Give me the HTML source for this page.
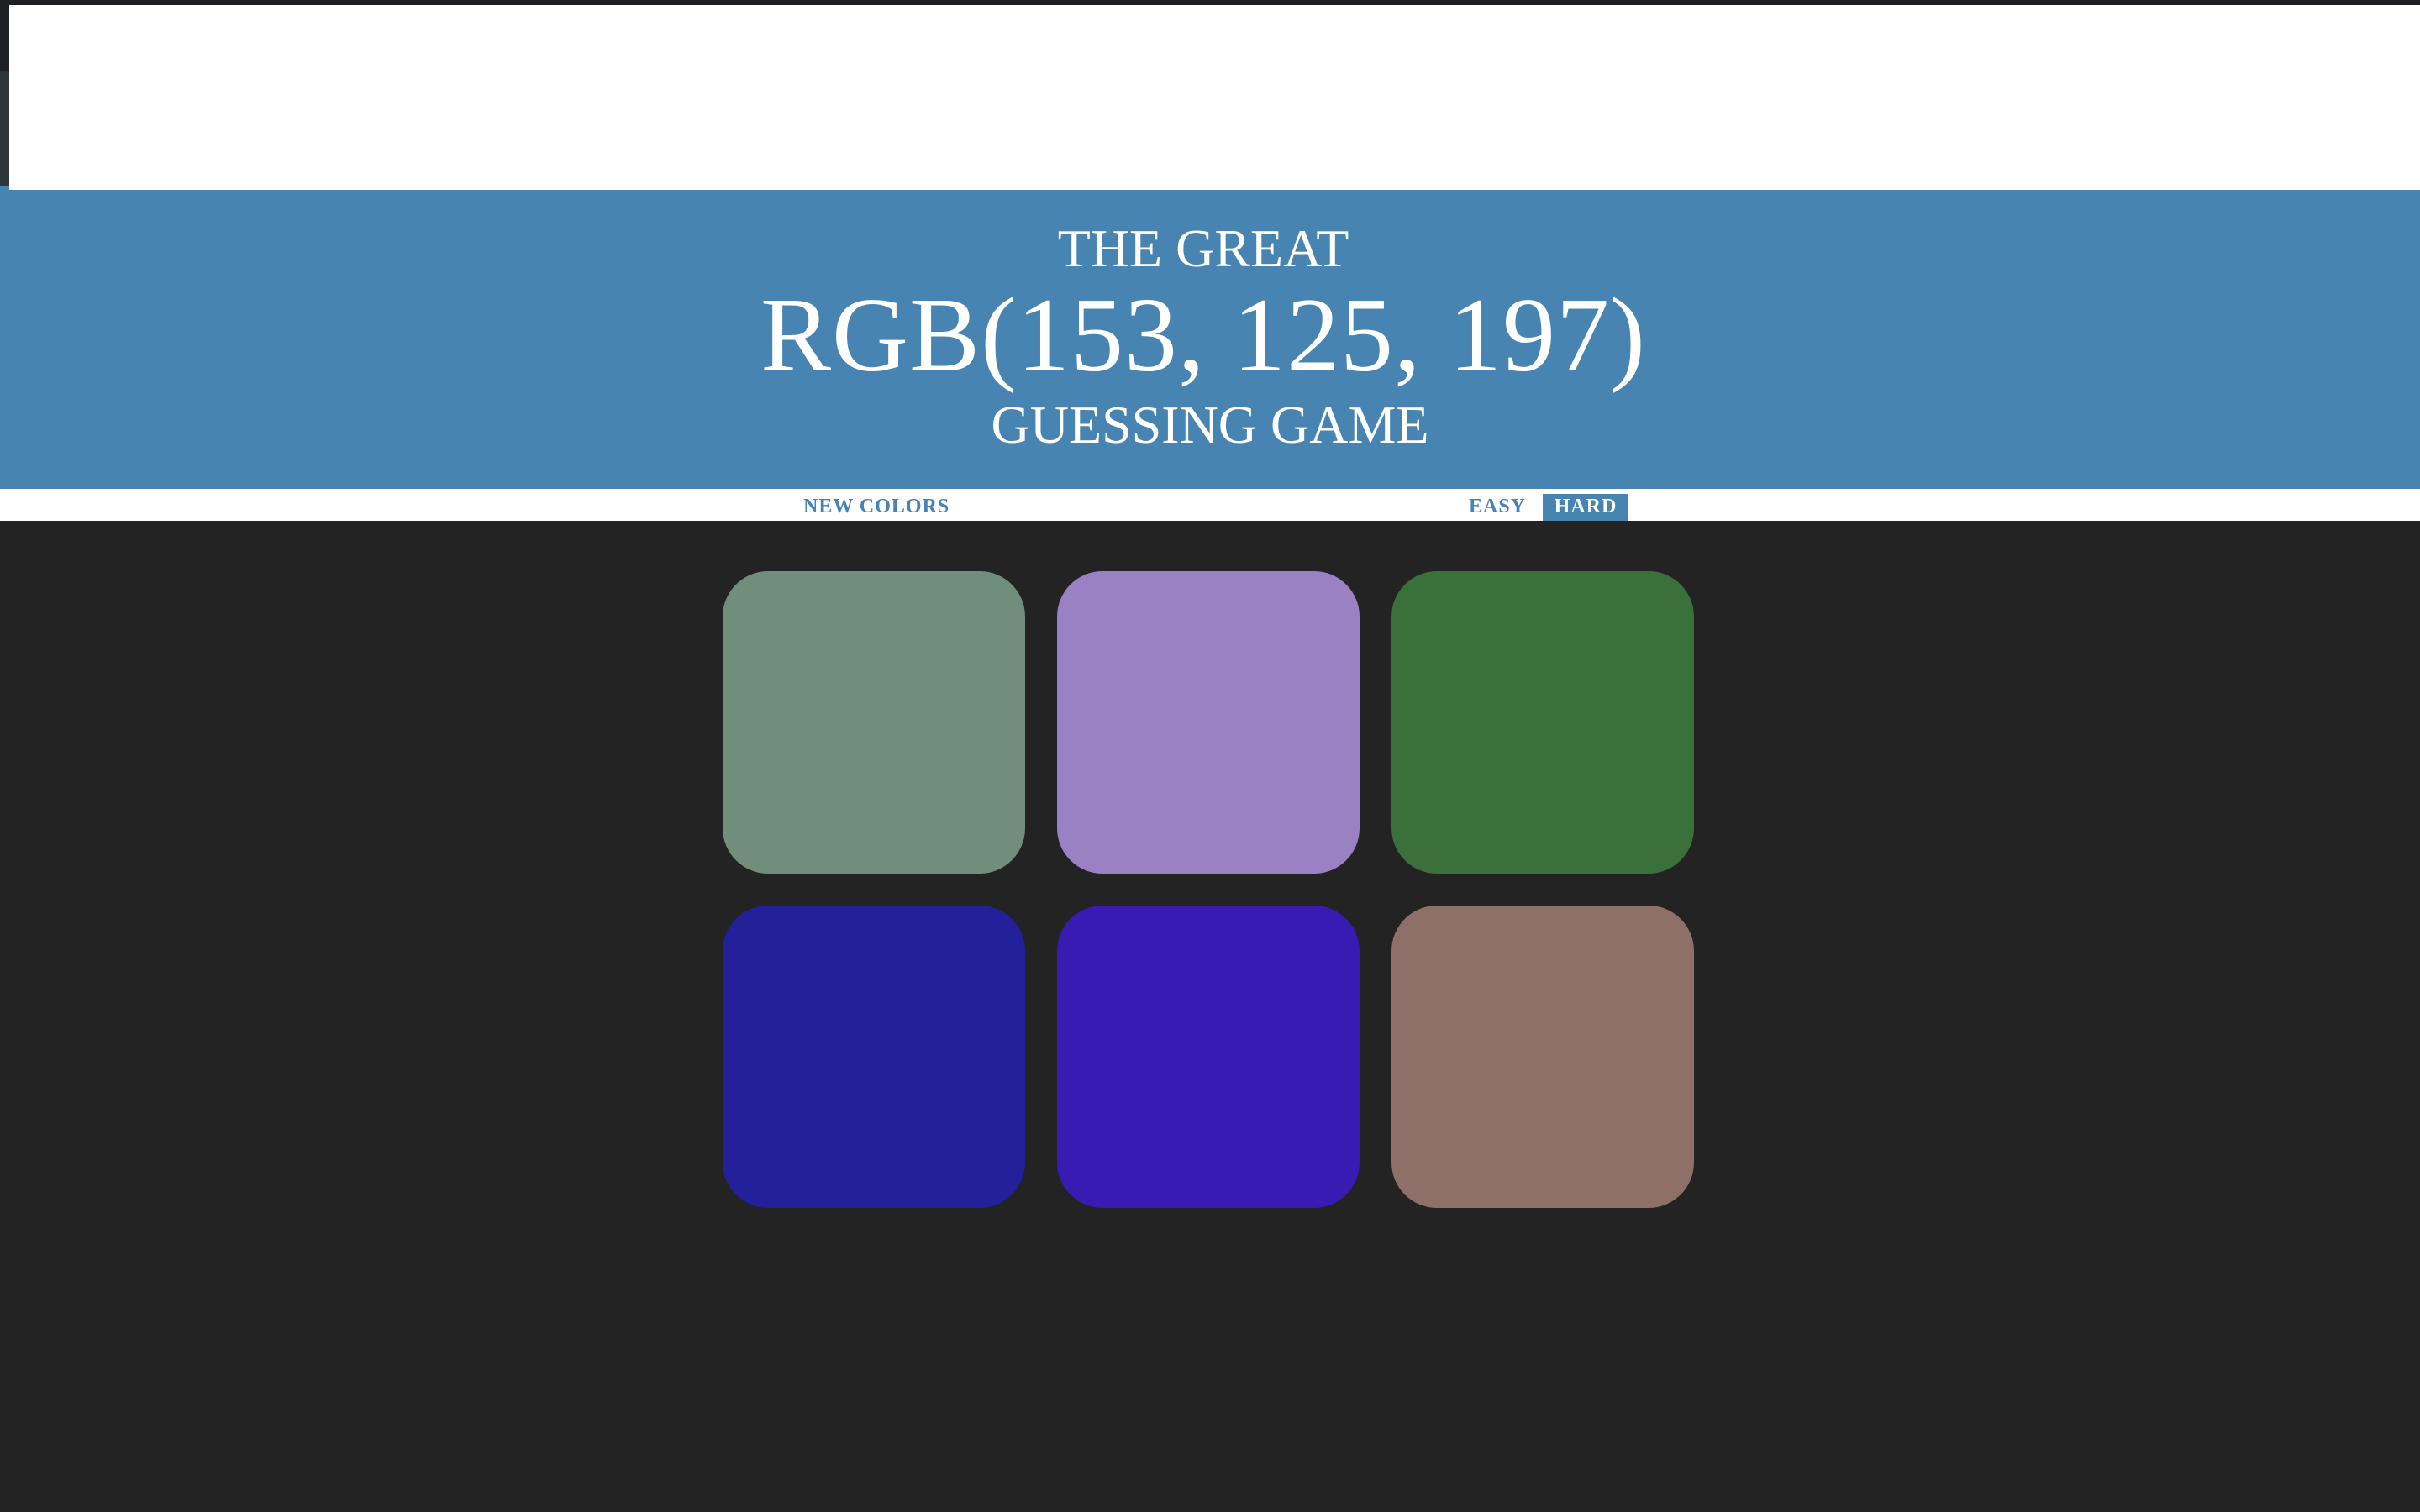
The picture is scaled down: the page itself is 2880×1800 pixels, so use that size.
<!DOCTYPE html>
<html><head><meta charset="utf-8"><style>
html,body{margin:0;padding:0;}
body{width:2880px;height:1800px;background:#232323;position:relative;overflow:hidden;font-family:"Liberation Serif","Times New Roman",serif;}
.a{position:absolute;}
.t{position:absolute;left:0;width:2880px;text-align:center;color:#fff;line-height:1;white-space:nowrap;}
.sq{position:absolute;width:360px;height:360px;border-radius:54px;}
.nav{position:absolute;font-weight:bold;font-size:24px;letter-spacing:1px;line-height:1;color:#4682b4;white-space:nowrap;}
</style></head><body>
<div class="a" style="left:0;top:0;width:2880px;height:6px;background:#1f2024"></div>
<div class="a" style="left:0;top:6px;width:11px;height:78px;background:#1f2024"></div>
<div class="a" style="left:0;top:84px;width:11px;height:138px;background:#30353a"></div>
<div class="a" style="left:0;top:222px;width:11px;height:4px;background:#4682b4"></div>
<div class="a" style="left:11px;top:6px;width:2869px;height:220px;background:#fff"></div>
<div class="a" style="left:0;top:226px;width:2880px;height:356px;background:#4884b2"></div>
<div class="t" style="top:264px;font-size:64px;left:-8px;">THE GREAT</div>
<div class="t" style="top:337px;font-size:126px;left:-8px;letter-spacing:1px;">RGB(153, 125, 197)</div>
<div class="t" style="top:474px;font-size:64px;">GUESSING GAME</div>
<div class="a" style="left:0;top:582px;width:2880px;height:38px;background:#fff"></div>
<div class="nav" style="left:956px;top:591px;">NEW COLORS</div>
<div class="nav" style="left:1748px;top:591px;">EASY</div>
<div class="a" style="left:1836px;top:588px;width:102px;height:32px;background:#4884b2"></div>
<div class="nav" style="left:1836px;width:102px;text-align:center;top:591px;color:#fff;">HARD</div>
<div class="sq" style="left:860px;top:680px;background:#718e7c"></div>
<div class="sq" style="left:1258px;top:680px;background:#9981c3"></div>
<div class="sq" style="left:1656px;top:680px;background:#3a703a"></div>
<div class="sq" style="left:860px;top:1078px;background:#23209a"></div>
<div class="sq" style="left:1258px;top:1078px;background:#381bb2"></div>
<div class="sq" style="left:1656px;top:1078px;background:#8f7068"></div>
</body></html>
